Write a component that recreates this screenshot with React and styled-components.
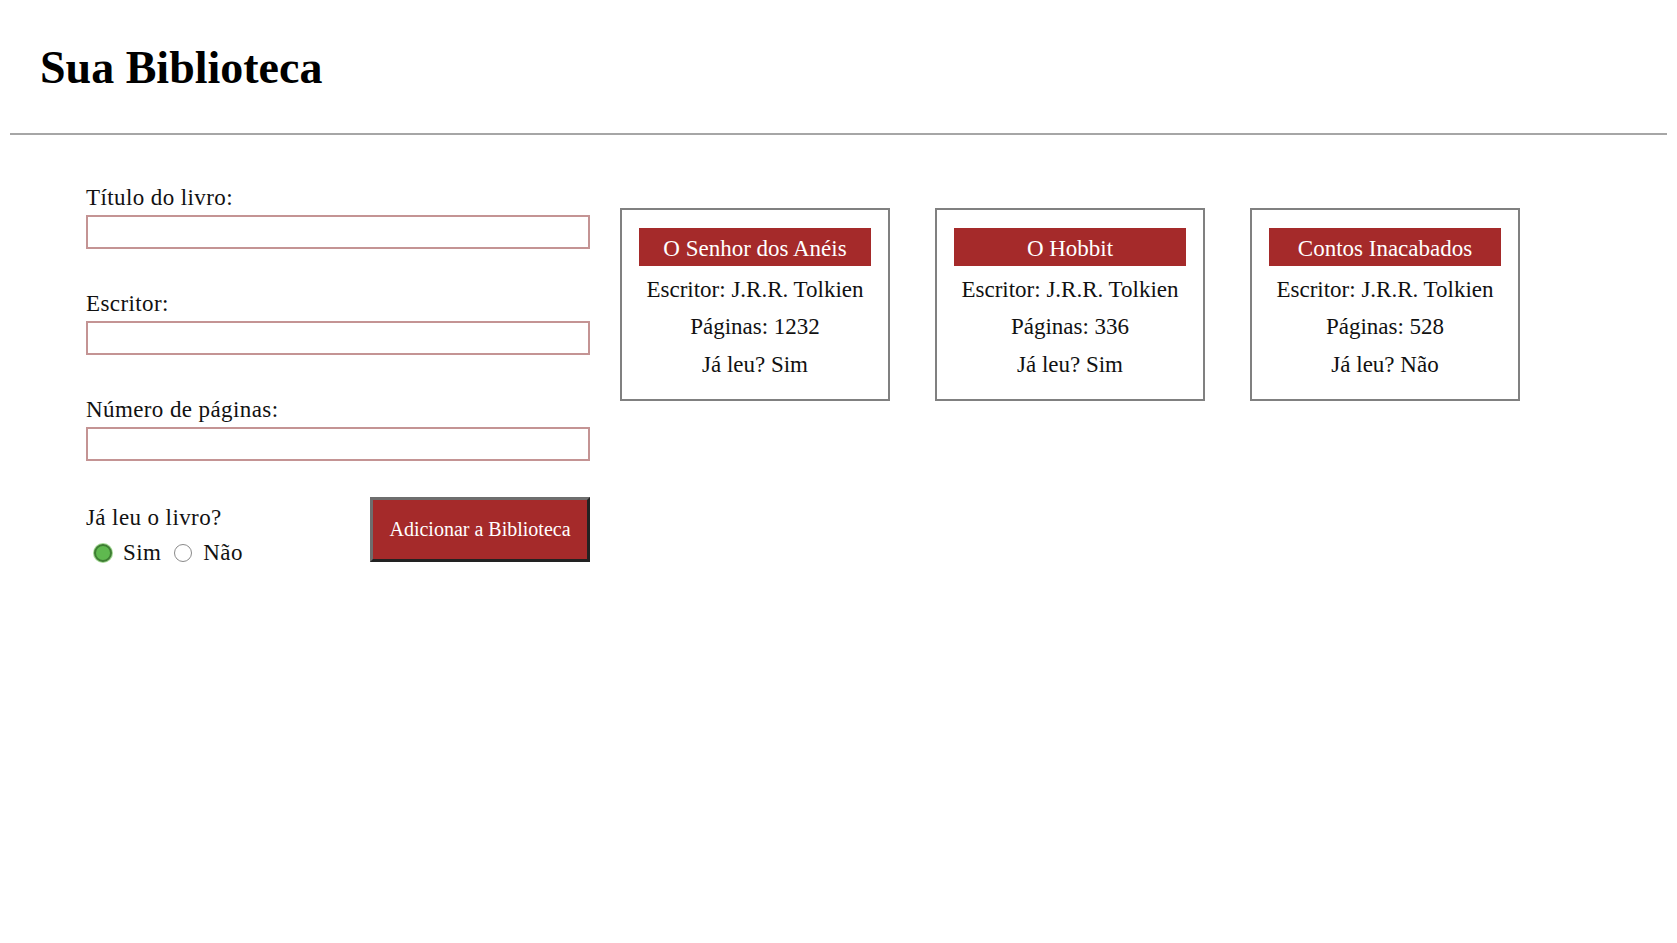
import React, { useState } from "react";
import styled, { createGlobalStyle } from "styled-components";

const GlobalStyle = createGlobalStyle`
  body {
    margin: 0;
    background: #ffffff;
    color: #111111;
    font-family: "Liberation Serif", "DejaVu Serif", serif;
  }
`;

const Header = styled.header`
  margin: 0 10px;
  padding: 45px 30px 42px;
  border-bottom: 2px solid #a6a6a6;
`;

const Title = styled.h1`
  margin: 0;
  font-size: 46px;
  line-height: 46px;
  font-weight: bold;
  color: #000;
`;

const Main = styled.main`
  display: flex;
  align-items: flex-start;
  gap: 30px;
  padding: 50px 0 0 86px;
`;

const Form = styled.form`
  width: 504px;
  display: flex;
  flex-direction: column;
`;

const Field = styled.div`
  display: flex;
  flex-direction: column;
  margin-bottom: 42px;
`;

const Label = styled.label`
  display: block;
  font-size: 23px;
  line-height: 26px;
  letter-spacing: 0.4px;
  color: #111;
`;

const Input = styled.input`
  box-sizing: border-box;
  margin-top: 4px;
  width: 100%;
  height: 34px;
  border: 2px solid #c49494;
  background: #fff;
  font-family: inherit;
  font-size: 18px;
  padding: 0 6px;
  outline: none;
`;

const BottomRow = styled.div`
  display: flex;
  justify-content: space-between;
  align-items: flex-start;
  margin-top: -6px;
`;

const ReadGroup = styled.div`
  display: flex;
  flex-direction: column;
  margin-top: 8px;
`;

const RadioRow = styled.div`
  display: flex;
  align-items: center;
  margin-top: 9px;
  padding-left: 8px;
  font-size: 23px;
  line-height: 26px;
  letter-spacing: 0.4px;
`;

const RadioOption = styled.label`
  display: inline-flex;
  align-items: center;
  gap: 11px;
  margin-right: 13px;
  cursor: pointer;
`;

const Radio = styled.input`
  appearance: none;
  margin: 0;
  width: 18px;
  height: 18px;
  border-radius: 50%;
  box-sizing: border-box;
  border: 1.5px solid #8a8a8a;
  background: #fff;
  &:checked {
    border: 2.5px solid #3e7d33;
    background: #5fb94f;
    box-shadow: 0 0 0 1px #a3d894;
  }
`;

const AddButton = styled.button`
  box-sizing: border-box;
  width: 220px;
  height: 65px;
  background: #a52a2a;
  color: #fff;
  font-family: inherit;
  font-size: 20px;
  border-style: solid;
  border-width: 3px;
  border-color: #6e6e6e #222 #222 #6e6e6e;
  cursor: pointer;
`;

const Cards = styled.div`
  display: flex;
  gap: 45px;
  margin-top: 23px;
`;

const Card = styled.div`
  box-sizing: border-box;
  width: 270px;
  padding: 18px 17px 16px;
  border: 2px solid #808080;
  text-align: center;
`;

const CardTitle = styled.h3`
  margin: 0 0 4.5px;
  padding-top: 3px;
  height: 38px;
  box-sizing: border-box;
  line-height: 35px;
  background: #a52a2a;
  color: #fff;
  font-size: 23px;
  font-weight: normal;
`;

const CardLine = styled.p`
  margin: 0;
  font-size: 23px;
  line-height: 37.5px;
  color: #111;
`;

const books = [
  { title: "O Senhor dos Anéis", author: "J.R.R. Tolkien", pages: 1232, read: true },
  { title: "O Hobbit", author: "J.R.R. Tolkien", pages: 336, read: true },
  { title: "Contos Inacabados", author: "J.R.R. Tolkien", pages: 528, read: false },
];

const App = () => {
  const [read, setRead] = useState("sim");

  return (
    <>
      <GlobalStyle />
      <Header>
        <Title>Sua Biblioteca</Title>
      </Header>
      <Main>
        <Form onSubmit={(e) => e.preventDefault()}>
          <Field>
            <Label htmlFor="titulo">Título do livro:</Label>
            <Input id="titulo" type="text" />
          </Field>
          <Field>
            <Label htmlFor="escritor">Escritor:</Label>
            <Input id="escritor" type="text" />
          </Field>
          <Field>
            <Label htmlFor="paginas">Número de páginas:</Label>
            <Input id="paginas" type="text" />
          </Field>
          <BottomRow>
            <ReadGroup>
              <Label as="span">Já leu o livro?</Label>
              <RadioRow>
                <RadioOption>
                  <Radio
                    type="radio"
                    name="lido"
                    checked={read === "sim"}
                    onChange={() => setRead("sim")}
                  />
                  Sim
                </RadioOption>
                <RadioOption>
                  <Radio
                    type="radio"
                    name="lido"
                    checked={read === "nao"}
                    onChange={() => setRead("nao")}
                  />
                  Não
                </RadioOption>
              </RadioRow>
            </ReadGroup>
            <AddButton type="submit">Adicionar a Biblioteca</AddButton>
          </BottomRow>
        </Form>
        <Cards>
          {books.map((book) => (
            <Card key={book.title}>
              <CardTitle>{book.title}</CardTitle>
              <CardLine>Escritor: {book.author}</CardLine>
              <CardLine>Páginas: {book.pages}</CardLine>
              <CardLine>Já leu? {book.read ? "Sim" : "Não"}</CardLine>
            </Card>
          ))}
        </Cards>
      </Main>
    </>
  );
};

export default App;
